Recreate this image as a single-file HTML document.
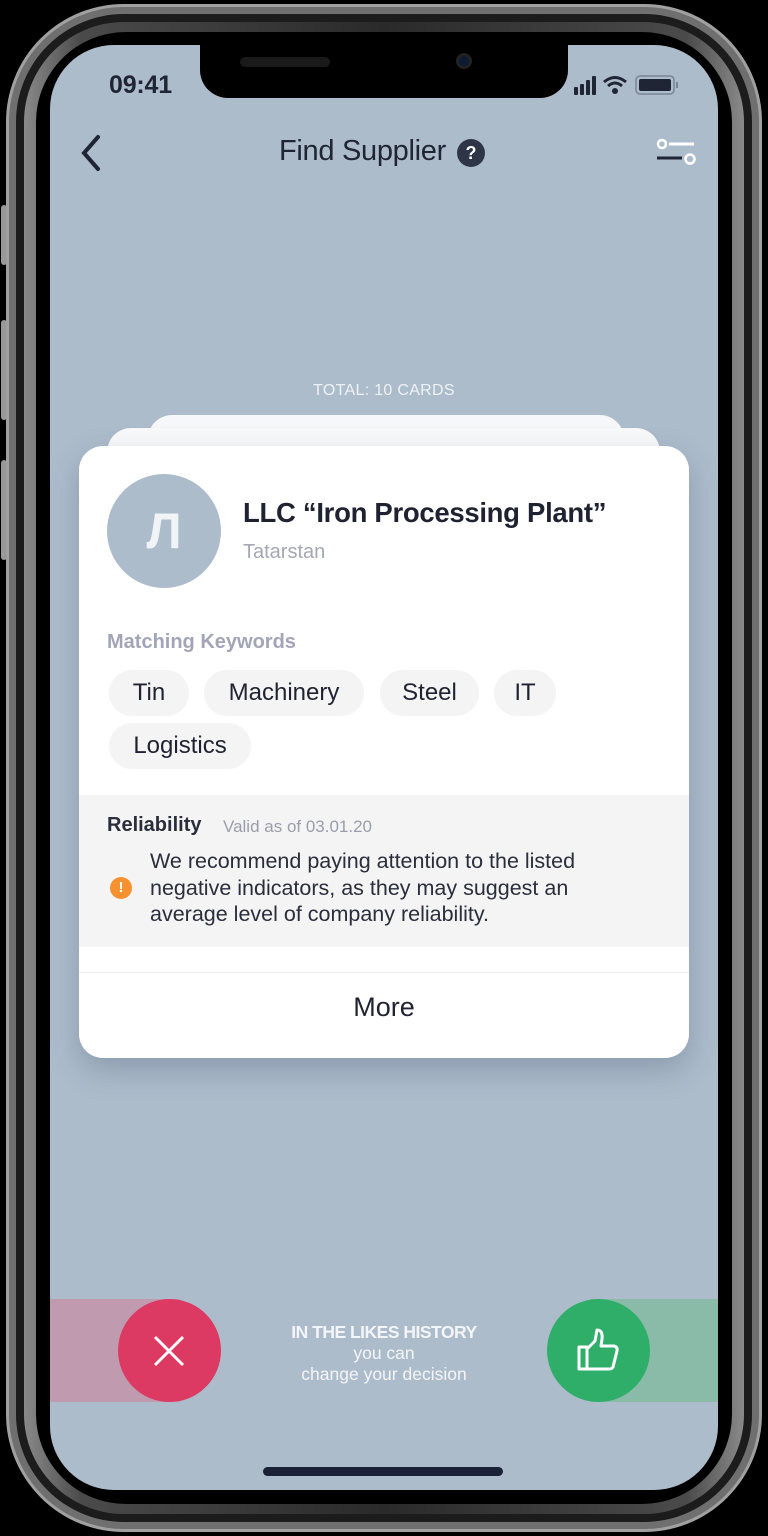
<!DOCTYPE html>
<html><head><meta charset="utf-8"><style>
*{margin:0;padding:0;box-sizing:border-box}
body{width:768px;height:1536px;background:#000;position:relative;overflow:hidden;font-family:"Liberation Sans",sans-serif}
.abs{position:absolute}
.f1{left:6px;top:4px;width:756px;height:1528px;border-radius:118px;background:#6f6f6f;border:3px solid #a0a0a0}
.f2{left:16px;top:14px;width:736px;height:1508px;border-radius:108px;background:#1c1c1c}
.f3{left:24px;top:22px;width:720px;height:1492px;border-radius:100px;background:linear-gradient(90deg,#8a8a8a,#4a4a4a 8%,#2a2a2a 50%,#4a4a4a 92%,#8a8a8a)}
.f4{left:36px;top:32px;width:696px;height:1472px;border-radius:90px;background:#000}
.screen{left:50px;top:45px;width:668px;height:1445px;border-radius:64px;background:#adbccb;overflow:hidden}
.btn{background:#999;border-radius:3px;width:6px;left:0}
.notch{left:150px;top:-2px;width:368px;height:55px;background:#000;border-radius:0 0 28px 28px}
.card{background:#fff;border-radius:24px}
.chip{position:absolute;height:46px;border-radius:23px;background:#f4f4f5;font-size:24px;color:#1f2230;line-height:46px;text-align:center}
</style></head><body>
<div class="abs btn" style="top:205px;height:60px;left:1px"></div>
<div class="abs btn" style="top:320px;height:100px;left:1px"></div>
<div class="abs btn" style="top:460px;height:100px;left:1px"></div>
<div class="abs f1"></div><div class="abs f2"></div><div class="abs f3"></div><div class="abs f4"></div>
<div class="abs screen">
  <div class="abs notch"></div>
  <div class="abs" style="left:190px;top:12px;width:90px;height:10px;border-radius:5px;background:#1a1a1a"></div>
  <div class="abs" style="left:406px;top:8px;width:16px;height:16px;border-radius:50%;background:#0d1a33;border:3px solid #222"></div>
  <div class="abs" style="left:59px;top:26px;font-size:25px;font-weight:bold;color:#1f2535;letter-spacing:-0.2px">09:41</div>
  <svg class="abs" style="left:520px;top:28px" width="150" height="26" viewBox="0 0 150 26">
    <rect x="4" y="14" width="4" height="8" rx="1" fill="#1f2535"/><rect x="10" y="11" width="4" height="11" rx="1" fill="#1f2535"/><rect x="16" y="7" width="4" height="15" rx="1" fill="#1f2535"/><rect x="22" y="3" width="4" height="19" rx="1" fill="#1f2535"/>
    <path d="M34 9 Q45 0 56 9 M38 13 Q45 7 52 13" stroke="#1f2535" stroke-width="3" fill="none"/><circle cx="45" cy="18" r="3" fill="#1f2535"/>
    <rect x="66" y="3" width="38" height="18" rx="4" stroke="#7a8494" stroke-width="1.5" fill="none"/><rect x="69" y="6" width="32" height="12" rx="2" fill="#1f2535"/><rect x="106" y="9" width="2" height="6" fill="#7a8494"/>
  </svg>
  <svg class="abs" style="left:26px;top:88px" width="30" height="40"><path d="M22 4 L8 20 L22 36" stroke="#1f2535" stroke-width="4" fill="none" stroke-linecap="round"/></svg>
  <div class="abs" style="left:229px;top:90px;font-size:29px;color:#1f2535;letter-spacing:-0.3px">Find Supplier</div>
  <div class="abs" style="left:407px;top:94px;width:28px;height:28px;border-radius:50%;background:#2d3546;color:#fff;font-size:18px;font-weight:bold;text-align:center;line-height:28px">?</div>
  <svg class="abs" style="left:602px;top:92px" width="50" height="34"><circle cx="10" cy="7" r="4" stroke="#fff" stroke-width="2.5" fill="none"/><path d="M17 7 H42" stroke="#fff" stroke-width="3"/><path d="M5 21 H30" stroke="#1f2535" stroke-width="3"/><circle cx="38" cy="22" r="4.5" stroke="#fff" stroke-width="2.5" fill="none"/></svg>
  <div class="abs" style="left:0;width:668px;top:337px;text-align:center;font-size:16px;color:#eef2f6;letter-spacing:0.3px">TOTAL: 10 CARDS</div>
  <div class="abs card" style="left:98px;top:370px;width:476px;height:80px;background:#f5f7fa"></div>
  <div class="abs card" style="left:57px;top:383px;width:553px;height:80px;background:#f8f9fb;box-shadow:0 2px 6px rgba(0,0,0,.06)"></div>
  <div class="abs card" style="left:29px;top:401px;width:610px;height:612px;box-shadow:0 12px 30px rgba(40,60,90,.25);overflow:hidden">
    <div class="abs" style="left:28px;top:28px;width:114px;height:114px;border-radius:50%;background:#adbccb;color:#f1f4f7;font-size:50px;font-weight:bold;text-align:center;line-height:114px;font-family:'Liberation Sans','DejaVu Sans',sans-serif">Л</div>
    <div class="abs" style="left:164px;top:51px;font-size:27.5px;font-weight:bold;color:#1f2230;letter-spacing:-0.3px">LLC “Iron Processing Plant”</div>
    <div class="abs" style="left:164px;top:95px;font-size:20px;color:#a4a8b5">Tatarstan</div>
    <div class="abs" style="left:28px;top:185px;font-size:20px;font-weight:bold;color:#a2a5b8">Matching Keywords</div>
    <div class="chip" style="left:30px;top:224px;width:80px">Tin</div>
    <div class="chip" style="left:125px;top:224px;width:160px">Machinery</div>
    <div class="chip" style="left:301px;top:224px;width:99px">Steel</div>
    <div class="chip" style="left:415px;top:224px;width:62px">IT</div>
    <div class="chip" style="left:30px;top:277px;width:142px">Logistics</div>
    <div class="abs" style="left:0;top:349px;width:610px;height:152px;background:#f4f4f5"></div>
    <div class="abs" style="left:28px;top:368px;font-size:20px;font-weight:bold;color:#2a2e3b">Reliability</div>
    <div class="abs" style="left:144px;top:371px;font-size:17px;color:#9a9eab">Valid as of 03.01.20</div>
    <div class="abs" style="left:31px;top:431px;width:22px;height:22px;border-radius:50%;background:#f5922f;color:#fff;font-size:15px;font-weight:bold;text-align:center;line-height:22px">!</div>
    <div class="abs" style="left:71px;top:402px;font-size:21.5px;line-height:26.5px;color:#2a2e3b;width:480px">We recommend paying attention to the listed negative indicators, as they may suggest an average level of company reliability.</div>
    <div class="abs" style="left:0;top:526px;width:610px;height:1px;background:#eeeff1"></div>
    <div class="abs" style="left:0;top:546px;width:610px;text-align:center;font-size:27px;color:#1f2230">More</div>
  </div>
  <div class="abs" style="left:0;top:1254px;width:130px;height:103px;background:#c09aaf"></div>
  <div class="abs" style="left:68px;top:1254px;width:103px;height:103px;border-radius:50%;background:#dc3963"></div>
  <svg class="abs" style="left:100px;top:1287px" width="38" height="38"><path d="M5 5 L33 33 M33 5 L5 33" stroke="#fff" stroke-width="3"/></svg>
  <div class="abs" style="left:540px;top:1254px;width:128px;height:103px;background:#8abaa8"></div>
  <div class="abs" style="left:497px;top:1254px;width:103px;height:103px;border-radius:50%;background:#2fae6a"></div>
  <svg class="abs" style="left:526px;top:1282px" width="46" height="46" viewBox="0 0 46 46"><path d="M3 20 H11 V42 H3 Z M11 22 L19 14 L21 3 Q27 3 26 12 L25 19 H38 Q42 20 41 24 L37 40 Q36 42 33 42 H11" stroke="#fff" stroke-width="3" fill="none" stroke-linejoin="round"/></svg>
  <div class="abs" style="left:190px;width:288px;top:1277px;text-align:center;color:#f3f5f8;font-size:17.5px;line-height:21px"><b style="letter-spacing:-0.5px">IN THE LIKES HISTORY</b><br>you can<br>change your decision</div>
  <div class="abs" style="left:213px;top:1422px;width:240px;height:9px;border-radius:5px;background:#1a2236"></div>
</div>
</body></html>
